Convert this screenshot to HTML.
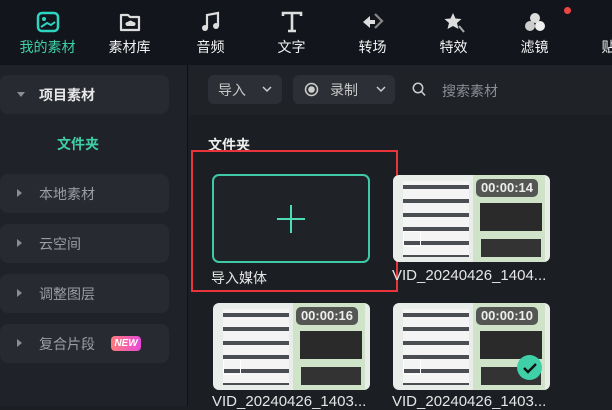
<!DOCTYPE html><html><head><meta charset="utf-8"><style>
*{margin:0;padding:0;box-sizing:border-box}
body{width:612px;height:406px;overflow:hidden;background:#1b1e23;font-family:"Liberation Sans","Noto Sans CJK SC",sans-serif;position:relative;color:#e8e8e8}
.top{position:absolute;left:0;top:0;width:612px;height:65px;background:#12161c}
.nav{position:absolute;top:0;width:81px;text-align:center}
.nav .ic{position:absolute;left:28px;top:10px;width:26px;height:24px}
.nav .t{position:absolute;top:37px;width:100%;font-size:14px;color:#f2f2f2}
.side{position:absolute;left:0;top:65px;width:188px;height:341px;background:#1f2228;border-right:1px solid #111}
.item{position:absolute;left:0;width:169px;height:39px;background:#272a31;border-radius:8px;font-size:14px;color:#9a9da3}
.item .tri{position:absolute;left:17px;top:15px;width:0;height:0;border-top:4px solid transparent;border-bottom:4px solid transparent;border-left:5px solid #8a8d93}
.item span{position:absolute;left:39px;top:10px}
.bar{position:absolute;left:189px;top:65px;width:423px;height:50px;background:#1f2227}
.btn{position:absolute;top:10px;height:29px;background:#2c3036;border-radius:6px;font-size:14px;color:#c8c8c8}
.lbl{position:absolute;font-size:15px;color:#e6e6e6;white-space:nowrap}
.thumb{position:absolute;width:157px;height:87px;border-radius:6px;overflow:hidden;background:#e9ede9}
.thumb .l{position:absolute;left:10px;top:6px;width:66px;height:76px;background:repeating-linear-gradient(#f4f4f4 0 4px,#4a4d52 4px 8px,#f4f4f4 8px 14px)}
.thumb .r{position:absolute;left:80px;top:0;width:72px;height:87px;background:#cfe3c9}
.thumb .d{position:absolute;left:87px;top:28px;width:62px;height:28px;background:#2a2a2a}
.thumb .d2{position:absolute;left:88px;top:64px;width:60px;height:18px;background:#333}
.dur{position:absolute;right:12px;top:4px;height:18px;padding:0 5px;background:rgba(70,70,70,.9);border-radius:5px;font-size:13px;font-weight:bold;color:#eee;line-height:18px}
.film{position:absolute;left:10px;top:56px;width:18px;height:16px;border:1.5px solid #fff;border-radius:2px}
</style></head><body>
<div class="top">
 <div class="nav" style="left:7px"><svg class="ic" viewBox="0 0 26 24"><rect x="3" y="3" width="20" height="18" rx="4" fill="none" stroke="#2dd4c0" stroke-width="2.5"/><circle cx="9" cy="9" r="2" fill="#2dd4c0"/><path d="M6 17 L12 13 L16 15 L20 12" stroke="#2dd4c0" stroke-width="2" fill="none"/></svg><div class="t" style="color:#3fd0a8">我的素材</div></div>
 <div class="nav" style="left:89px"><svg class="ic" viewBox="0 0 26 24"><path d="M4 5h7l2 2h9v13H4z" fill="none" stroke="#ddd" stroke-width="2.2" stroke-linejoin="round"/><path d="M10 16h7a2 2 0 0 0-1-4 3 3 0 0 0-5 0 2 2 0 0 0-1 4z" fill="#ddd"/></svg><div class="t">素材库</div></div>
 <div class="nav" style="left:170px"><svg class="ic" viewBox="0 0 26 24"><path d="M9 18V5l11-2v13" stroke="#ddd" stroke-width="2.2" fill="none"/><circle cx="7" cy="18" r="3" fill="#ddd"/><circle cx="18" cy="16" r="3" fill="#ddd"/></svg><div class="t">音频</div></div>
 <div class="nav" style="left:251px"><svg class="ic" viewBox="0 0 26 24"><path d="M4 6V3h18v3M13 3v18M9 21h8" stroke="#ddd" stroke-width="2.6" fill="none"/></svg><div class="t">文字</div></div>
 <div class="nav" style="left:332px"><svg class="ic" viewBox="0 0 26 24"><path d="M3 12l7-6v4h5v4h-5v4z" fill="#ddd"/><path d="M15 4l7 7-7 7" stroke="#888" stroke-width="2.2" fill="none"/></svg><div class="t">转场</div></div>
 <div class="nav" style="left:413px"><svg class="ic" viewBox="0 0 26 24"><path d="M12 3l2.5 5.5 6 .5-4.5 4 1.5 6-5.5-3-5.5 3 1.5-6-4.5-4 6-.5z" fill="#ddd"/><path d="M18 16l5 6" stroke="#aaa" stroke-width="2"/></svg><div class="t">特效</div></div>
 <div class="nav" style="left:494px"><svg class="ic" viewBox="0 0 26 24"><circle cx="13" cy="8" r="5" fill="#ddd"/><circle cx="8" cy="16" r="5" fill="#ccc"/><circle cx="18" cy="16" r="5" fill="#eee"/></svg><div class="t">滤镜</div><div style="position:absolute;left:70px;top:7px;width:7px;height:7px;border-radius:50%;background:#f04444"></div></div>
 <div class="nav" style="left:575px"><svg class="ic" viewBox="0 0 26 24"><path d="M28 4l-5 14h5" fill="#ddd"/></svg><div class="t">贴纸</div></div>
</div>
<div class="side">
 <div class="item" style="top:10px;background:#272a31"><div class="tri" style="border-left:4px solid transparent;border-right:4px solid transparent;border-top:5px solid #8a8d93;border-bottom:0;top:17px"></div><span style="color:#e8e8e8;font-weight:bold">项目素材</span></div>
 <div style="position:absolute;left:57px;top:69px;font-size:14px;font-weight:bold;color:#3fd0a8">文件夹</div>
 <div class="item" style="top:109px"><div class="tri"></div><span>本地素材</span></div>
 <div class="item" style="top:159px"><div class="tri"></div><span>云空间</span></div>
 <div class="item" style="top:209px"><div class="tri"></div><span>调整图层</span></div>
 <div class="item" style="top:259px"><div class="tri"></div><span>复合片段</span><div style="position:absolute;left:111px;top:12px;width:30px;height:15px;border-radius:4px;background:linear-gradient(90deg,#ff7a7a,#e84ad8);font-size:10px;font-style:italic;font-weight:bold;color:#fff;text-align:center;line-height:15px">NEW</div></div>
</div>
<div class="bar">
 <div class="btn" style="left:19px;width:74px"><span style="position:absolute;left:10px;top:5px">导入</span><svg style="position:absolute;left:54px;top:11px" width="10" height="7"><path d="M1 1l4 4 4-4" stroke="#ccc" stroke-width="1.5" fill="none"/></svg></div>
 <div class="btn" style="left:104px;width:102px"><svg style="position:absolute;left:11px;top:7px" width="15" height="15"><circle cx="7.5" cy="7.5" r="6" stroke="#ccc" stroke-width="1.5" fill="none"/><circle cx="7.5" cy="7.5" r="3.3" fill="#ccc"/></svg><span style="position:absolute;left:37px;top:5px">录制</span><svg style="position:absolute;left:83px;top:11px" width="10" height="7"><path d="M1 1l4 4 4-4" stroke="#ccc" stroke-width="1.5" fill="none"/></svg></div>
 <svg style="position:absolute;left:223px;top:17px" width="14" height="15"><circle cx="6" cy="6" r="4.7" stroke="#ccc" stroke-width="1.5" fill="none"/><path d="M9.5 9.5l3.5 4" stroke="#ccc" stroke-width="1.5"/></svg>
 <span style="position:absolute;left:253px;top:16px;font-size:14px;color:#8a8d93">搜索素材</span>
</div>
<div style="position:absolute;left:208px;top:135px;font-size:14px;font-weight:bold;color:#eee">文件夹</div>
<div style="position:absolute;left:191px;top:150px;width:207px;height:142px;border:2px solid #e8343a"></div>
<div style="position:absolute;left:212px;top:174px;width:158px;height:89px;border:2.5px solid #3fc9a6;border-radius:7px;background:#1f2328"></div>
<div style="position:absolute;left:290px;top:205px;width:2px;height:28px;background:#4fdcb4"></div>
<div style="position:absolute;left:277px;top:218px;width:28px;height:2px;background:#4fdcb4"></div>
<div class="lbl" style="left:211px;top:268px;font-size:14px">导入媒体</div>

<div class="thumb" style="left:393px;top:175px"><div class="l"></div><div class="r"></div><div class="d"></div><div class="d2"></div><div class="dur">00:00:14</div><div class="film"></div></div>
<div class="lbl" style="left:392px;top:267px">VID_20240426_1404...</div>
<div class="thumb" style="left:213px;top:303px"><div class="l"></div><div class="r"></div><div class="d"></div><div class="d2"></div><div class="dur">00:00:16</div><div class="film"></div></div>
<div class="lbl" style="left:212px;top:393px">VID_20240426_1403...</div>
<div class="thumb" style="left:393px;top:303px"><div class="l"></div><div class="r"></div><div class="d"></div><div class="d2"></div><div class="dur">00:00:10</div><div class="film"></div>
<div style="position:absolute;left:124px;top:52px;width:25px;height:25px;border-radius:50%;background:#3fd0a8"></div><svg style="position:absolute;left:130px;top:59px" width="14" height="12"><path d="M1 6l4 4 8-8" stroke="#111" stroke-width="2.4" fill="none"/></svg></div>
<div class="lbl" style="left:392px;top:393px">VID_20240426_1403...</div>
</body></html>
